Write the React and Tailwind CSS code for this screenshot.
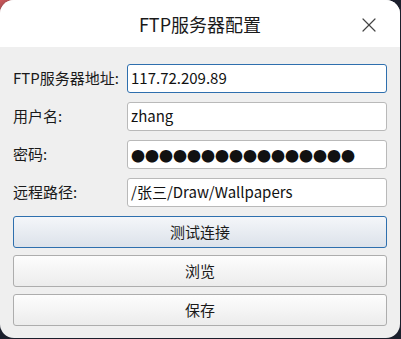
import { X } from "lucide-react";

const font = { fontFamily: '"Noto Sans CJK SC", "Noto Sans", sans-serif' };

const Field = ({ label, children, focused }) => (
  <div className="flex items-center h-[29px]">
    <div className="w-[114px] text-[15px] text-[#1a1a1a]">{label}</div>
    <div
      className={
        "flex-1 h-full flex items-center px-[3px] bg-white rounded-[3px] border text-[15px] text-[#111] " +
        (focused ? "border-[#2e6fae]" : "border-[#b9b9b9]")
      }
    >
      {children}
    </div>
  </div>
);

const Button = ({ children, primary }) => (
  <button
    className={
      "h-[32px] w-full rounded-[3px] border text-[15px] text-[#1a1a1a] flex items-center justify-center " +
      (primary
        ? "border-[#2e6fae] bg-gradient-to-b from-[#f4f6f9] to-[#dce2ea]"
        : "border-[#adadad] bg-gradient-to-b from-[#fdfdfd] to-[#ececec]")
    }
  >
    {children}
  </button>
);

export default function App() {
  return (
    <div className="w-[401px] h-[339px] bg-[#1b1f2c] relative overflow-hidden" style={font}>
      <div className="absolute left-0 top-0 w-[30px] h-[20px] bg-gradient-to-br from-[#d0585a] to-[#1b1f2c]" />
      <div className="relative w-[400px] h-[338px] rounded-[14px] overflow-hidden flex flex-col bg-[#efefef]">
        <div className="h-[47px] bg-white relative flex items-center justify-center shrink-0">
          <span className="text-[18px] text-[#1a1a1a] pt-[2px]">FTP服务器配置</span>
          <X size={24} strokeWidth={1.2} className="absolute right-[19px] top-[13px] text-[#444]" />
        </div>
        <div className="flex flex-col gap-[9px] px-[13px] pt-[17px]">
          <Field label="FTP服务器地址:" focused>
            117.72.209.89
          </Field>
          <Field label="用户名:">zhang</Field>
          <Field label="密码:">
            <span className="text-[14px] tracking-[0px] leading-none">●●●●●●●●●●●●●●●●</span>
          </Field>
          <Field label="远程路径:">/张三/Draw/Wallpapers</Field>
        </div>
        <div className="flex flex-col gap-[7px] px-[13px] pt-[9px]">
          <Button primary>测试连接</Button>
          <Button>浏览</Button>
          <Button>保存</Button>
        </div>
      </div>
    </div>
  );
}
